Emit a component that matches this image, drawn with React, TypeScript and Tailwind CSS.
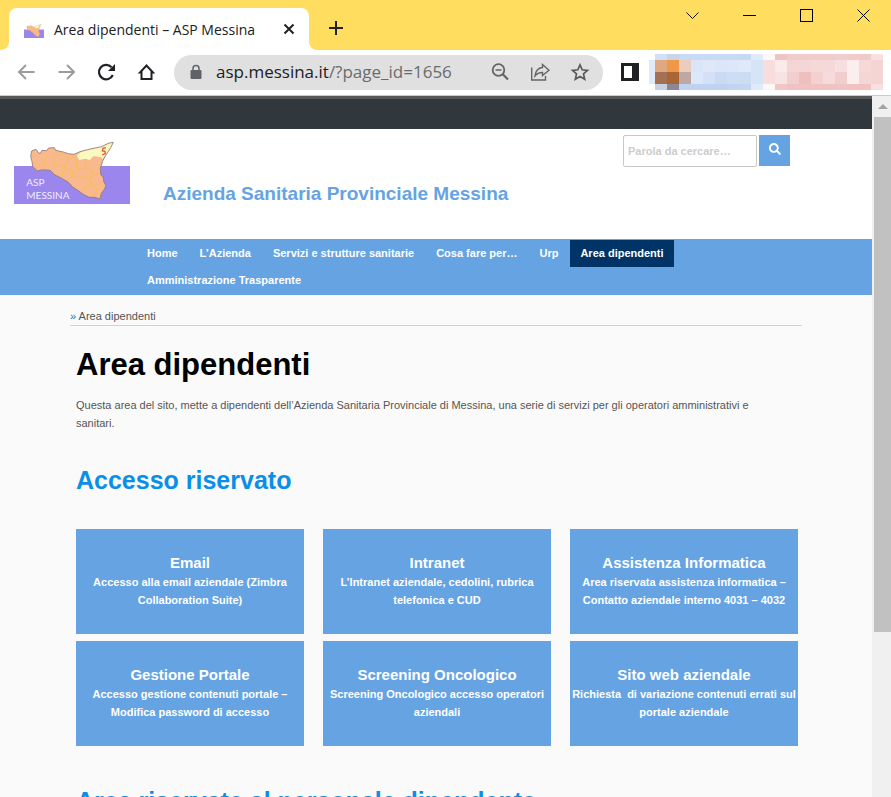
import React from "react";
import { FaSearch } from "react-icons/fa";

const NAV_ITEMS = [
  { label: "Home" },
  { label: "L’Azienda" },
  { label: "Servizi e strutture sanitarie" },
  { label: "Cosa fare per…" },
  { label: "Urp" },
  { label: "Area dipendenti", active: true },
  { label: "Amministrazione Trasparente" },
];

const SERVICES = [
  { title: "Email", text: "Accesso alla email aziendale (Zimbra Collaboration Suite)" },
  { title: "Intranet", text: "L’Intranet aziendale, cedolini, rubrica telefonica e CUD" },
  { title: "Assistenza Informatica", text: "Area riservata assistenza informatica – Contatto aziendale interno 4031 – 4032" },
  { title: "Gestione Portale", text: "Accesso gestione contenuti portale – Modifica password di accesso" },
  { title: "Screening Oncologico", text: "Screening Oncologico accesso operatori aziendali" },
  { title: "Sito web aziendale", text: "Richiesta \u00a0di variazione contenuti errati sul portale aziendale" },
];

// Pixelated strip of extensions and profile: four rows of nineteen cells.
const MOSAIC: { y: number; h: number; cells: string[] }[] = [
  { y: 0, h: 6, cells: ["d2dff4", "c9d5e6", "c8daf5", "c8daf5", "c8daf5", "c8daf5", "c9dbf4", "c6d9f2", "e0ebfa", "fdf8f8", "efc4c4", "f2cccc", "f2cbcb", "f2cbcb", "f2cbcc", "f2cdcd", "f2cbcb", "f0c9c9", "f8e0e0"] },
  { y: 6, h: 12, cells: ["e0a880", "ef9848", "eacdbc", "dae6f8", "dfe8f9", "dce6f8", "dce8f9", "dee9f9", "d6e4f7", "f7dddd", "fbeaea", "f4d5d5", "f4d6d8", "f5d8d8", "f5d9d8", "f7dfe1", "fdeeee", "f6d8d6", "f5d5d3"] },
  { y: 18, h: 12, cells: ["a37053", "a86535", "bda9a2", "dce8f9", "d3e0f6", "c9daf3", "cdddf4", "cbdcf3", "d6e4f7", "f7dddd", "f7e3e3", "f2cece", "edc0be", "f4d1d0", "f7dadc", "f2cdce", "fdeeee", "f5d6d5", "f5d5d3"] },
  { y: 30, h: 6, cells: ["c8d1e2", "8b8794", "bfd3f1", "bfd3f1", "bfd3f1", "bfd3f1", "c1d5f2", "c2d6f2", "e0ebfa", "fdf8f8", "f2c6c6", "f0c2c2", "f0c2c2", "f0c2c2", "f0c2c2", "f0c4c4", "f0c2c2", "f0c2c2", "f8e0e0"] },
];

function SicilyLogo({ className, showText = true }: { className: string; showText?: boolean }) {
  return (
    <svg viewBox="42 48 348 189" preserveAspectRatio="none" className={className} aria-hidden="true">
      <rect x="42" y="123" width="348" height="114" fill="#9a86ec" />
      <path
        d="M92 95 L95 78 L108 73 L116 84 L121 85 L126 76 L140 77 L146 69 L163 68 L167 76 L190 81 L205 86 L222 88 L240 80 L262 74 L290 68 L305 65 L325 55 L340 52 L332 68 L318 90 L308 108 L301 130 L302 148 L310 158 L312 172 L318 182 L312 195 L304 205 L300 222 L285 217 L268 217 L250 208 L232 195 L218 186 L205 172 L182 158 L165 150 L150 136 L125 134 L112 138 L98 124 L96 110 Z"
        fill="#fab98c"
        stroke="#8d7a76"
        strokeWidth="2.500"
        strokeLinejoin="round"
      />
      <path
        d="M230 92 L242 82 L264 76 L292 70 L306 67 L326 57 L337 54 L330 68 L316 90 L307 103 L304 96 L280 94 L270 105 L255 101 L238 105 Z"
        fill="#fafac0"
      />
      <g fill="none" stroke="#f3c24e" strokeWidth="3">
        <path d="M140 94 L131 108 L137 122 L127 134" />
        <path d="M163 92 L188 88 L204 100 L201 116 L188 124 L165 118 L158 104 Z" />
        <path d="M204 100 L220 96 L232 108 L228 128 L243 134 L262 132 L276 138 L280 152 L268 160 L246 156 L216 158 L218 140 L200 130 L186 144 L190 158" />
        <path d="M262 132 L254 118 L258 104" />
        <path d="M268 160 L274 176 L258 184 L246 202 M280 152 L296 150 M274 176 L290 190 L284 214" />
      </g>
      <path d="M318 68 L309 70 L307 78 L315 79 L316 86 L306 90" fill="none" stroke="#e2573b" strokeWidth="4" />
      {showText && (
        <g fill="#f1edff" fontFamily="Lato, sans-serif" fontSize="30">
          <text x="79" y="184">ASP</text>
          <text x="79" y="222">MESSINA</text>
        </g>
      )}
    </svg>
  );
}

function TabFlare({ className }: { className: string }) {
  return (
    <svg viewBox="0 0 8 8" className={className} aria-hidden="true">
      <path d="M8 0 V8 H0 A8 8 0 0 0 8 0 Z" fill="#fff" />
    </svg>
  );
}

function TitleBar() {
  return (
    <div className="flex h-[50px] shrink-0 items-end justify-between bg-[#ffdd5e]">
      <div className="flex items-end">
        <TabFlare className="ml-px size-2" />
        <div className="flex h-[42px] w-[300px] items-center rounded-t-lg bg-white pr-2.5 pl-[15px]">
          <SicilyLogo className="mt-1 h-3.5 w-5" showText={false} />
          <span className="ml-2.5 flex-1 text-[14px] whitespace-nowrap text-[#202124]">Area dipendenti – ASP Messina</span>
          <button type="button" aria-label="Chiudi scheda" className="flex size-5 items-center justify-center">
            <svg viewBox="0 0 12 12" className="size-3" fill="none" stroke="#202124" strokeWidth="2">
              <path d="M1.500 1.500 L10.500 10.500 M10.500 1.500 L1.500 10.500" />
            </svg>
          </button>
        </div>
        <TabFlare className="size-2 -scale-x-100" />
        <button type="button" aria-label="Nuova scheda" className="mb-3 ml-[9px] flex size-5 items-center justify-center">
          <svg viewBox="0 0 16 16" className="size-4" fill="none" stroke="#202124" strokeWidth="2">
            <path d="M8 1 V15 M1 8 H15" />
          </svg>
        </button>
      </div>
      <div className="flex items-center gap-[42px] self-start pt-2 pr-5">
        <button type="button" aria-label="Cerca schede">
          <svg viewBox="0 0 15 15" className="size-[15px]" fill="none" stroke="#111" strokeWidth="1">
            <path d="M1.500 4.500 L7.500 10.500 L13.500 4.500" />
          </svg>
        </button>
        <button type="button" aria-label="Riduci a icona">
          <svg viewBox="0 0 15 15" className="size-[15px]" fill="none" stroke="#000" strokeWidth="1">
            <path d="M1 7.500 H14" />
          </svg>
        </button>
        <button type="button" aria-label="Ingrandisci">
          <svg viewBox="0 0 15 15" className="size-[15px]" fill="none" stroke="#000" strokeWidth="1">
            <rect x="1.500" y="1.500" width="12" height="12" />
          </svg>
        </button>
        <button type="button" aria-label="Chiudi">
          <svg viewBox="0 0 15 15" className="size-[15px]" fill="none" stroke="#000" strokeWidth="1">
            <path d="M1.500 1.500 L13.500 13.500 M13.500 1.500 L1.500 13.500" />
          </svg>
        </button>
      </div>
    </div>
  );
}

function Toolbar() {
  return (
    <div className="flex h-[46px] shrink-0 items-center border-b border-[#cbcbcb] bg-white pr-2 pb-px pl-4">
      <div className="flex gap-5">
        <button type="button" aria-label="Indietro">
          <svg viewBox="0 0 20 20" className="size-5" fill="none" stroke="#9c9c9c" strokeWidth="2">
            <path d="M18.500 10 H3.500 M10 3 L3 10 L10 17" />
          </svg>
        </button>
        <button type="button" aria-label="Avanti">
          <svg viewBox="0 0 20 20" className="size-5" fill="none" stroke="#9c9c9c" strokeWidth="2">
            <path d="M2.500 10 H17.500 M11 3 L18 10 L11 17" />
          </svg>
        </button>
        <button type="button" aria-label="Ricarica">
          <svg viewBox="0 0 20 20" className="size-5" fill="none" stroke="#202124" strokeWidth="2.200">
            <path d="M16.800 13 A7.200 7.200 0 1 1 15.500 5.200" />
            <path d="M19 2 V9 H12 Z" fill="#202124" stroke="none" />
          </svg>
        </button>
        <button type="button" aria-label="Pagina iniziale">
          <svg viewBox="0 0 20 20" className="size-5" fill="none" stroke="#202124" strokeWidth="2">
            <path d="M4 10.500 H5.500 V17 H15.500 V10.500 H17 L10.500 3.500 Z" />
          </svg>
        </button>
      </div>
      <div className="ml-[18px] flex h-[35px] flex-1 items-center rounded-full bg-[#e0e0e0] pr-[13px] pl-4">
        <svg viewBox="0 0 12 16" className="h-4 w-3" aria-hidden="true">
          <rect x="0.500" y="6" width="11" height="9" rx="1" fill="#5f6368" />
          <path d="M3 6.500 V4.500 A3 3 0 0 1 9 4.500 V6.500" fill="none" stroke="#5f6368" strokeWidth="1.500" />
        </svg>
        <p className="ml-3.5 flex-1 text-[17px] whitespace-nowrap text-[#6b6b6b]">
          <span className="text-[#202124]">asp.messina.it</span>/?page_id=1656
        </p>
        <div className="flex gap-5">
          <button type="button" aria-label="Zoom">
            <svg viewBox="0 0 20 20" className="size-5" fill="none" stroke="#636466">
              <circle cx="8.500" cy="8" r="5.800" strokeWidth="1.800" />
              <path d="M5.500 8 H11.500" strokeWidth="1.500" />
              <path d="M12.800 12.300 L18 17.500" strokeWidth="2.200" />
            </svg>
          </button>
          <button type="button" aria-label="Condividi">
            <svg viewBox="0 0 20 20" className="size-5" fill="none" stroke="#636466" strokeWidth="1.400">
              <path d="M1.700 5.500 V18 H15.500 V14" />
              <path d="M12.500 2.500 L19 8.200 L12.500 13.500 V10.500 C9 10.500 7 11.500 5 14 C5.500 9.500 8 6 12.500 5.500 Z" />
            </svg>
          </button>
          <button type="button" aria-label="Aggiungi ai preferiti">
            <svg viewBox="0 0 20 20" className="size-5" fill="none" stroke="#5a5b5d" strokeWidth="1.700">
              <path d="M10 2.800 L12.200 7.800 L17.500 8.300 L13.500 11.900 L14.700 17.300 L10 14.500 L5.300 17.300 L6.500 11.900 L2.500 8.300 L7.800 7.800 Z" />
            </svg>
          </button>
        </div>
      </div>
      <button type="button" aria-label="Pannello laterale" className="ml-[18px]">
        <svg viewBox="0 0 18 18" className="size-[18px]">
          <rect width="18" height="18" fill="#202124" />
          <rect x="3" y="3" width="8" height="12" fill="#fff" />
        </svg>
      </button>
      <svg viewBox="0 0 234 36" className="ml-2.5 h-9 w-[234px]" shapeRendering="crispEdges" aria-hidden="true">
        <rect x="0" y="6" width="6" height="24" fill="#deeafa" />
        {MOSAIC.map((row) =>
          row.cells.map((fill, i) => (
            <rect key={`${row.y}-${i}`} x={6 + i * 12} y={row.y} width="12" height={row.h} fill={`#${fill}`} />
          )),
        )}
      </svg>
    </div>
  );
}

function SiteHeader() {
  return (
    <header>
      <div className="h-[33px] border-t-[3px] border-[#585858] bg-[#30373d]" />
      <div className="flex h-[110px] items-start bg-white pr-[82px] pl-3.5">
        <SicilyLogo className="mt-3 h-[63px] w-[116px]" />
        <p className="mt-[53px] ml-[33px] flex-1 text-[19px] leading-6 font-bold text-[#65a3e3]">
          Azienda Sanitaria Provinciale Messina
        </p>
        <form className="mt-1.5 flex gap-0.5" onSubmit={(e) => e.preventDefault()}>
          <input
            type="search"
            aria-label="Parola da cercare"
            placeholder="Parola da cercare…"
            className="h-8 w-[134px] rounded-xs border border-[#c8c8c8] px-1 text-[11px] font-bold text-[#555] placeholder:text-[#cccccc]"
          />
          <button type="submit" aria-label="Cerca" className="flex h-[31px] w-[31px] items-center justify-center bg-[#65a3e3] pb-1">
            <FaSearch className="size-3 text-white" />
          </button>
        </form>
      </div>
      <nav className="flex flex-wrap bg-[#65a3e3] pt-px pr-[130px] pb-px pl-[137px]">
        {NAV_ITEMS.map((item) => (
          <a
            key={item.label}
            href="#"
            aria-current={item.active ? "page" : undefined}
            className={`mr-0.5 h-[27px] px-2.5 text-[11px] leading-[27px] font-bold whitespace-nowrap text-white ${item.active ? "bg-[#003366]" : ""}`}
          >
            {item.label}
          </a>
        ))}
      </nav>
    </header>
  );
}

function ServiceCard({ title, text }: { title: string; text: string }) {
  return (
    <a href="#" className="block h-[105px] bg-[#65a3e3] px-0.5 pt-6 text-center font-bold text-white">
      <h3 className="text-[15px] leading-5">{title}</h3>
      <p className="text-[11px] leading-[18px]">{text}</p>
    </a>
  );
}

function Scrollbar() {
  return (
    <div className="flex w-[19px] shrink-0 flex-col bg-[#f0f0f0] pl-0.5" aria-hidden="true">
      <div className="flex h-[21px] items-center justify-center">
        <svg viewBox="0 0 10 6" className="h-1.5 w-2.5">
          <path d="M0 5 L5 0 L10 5 Z" fill="#a3a3a3" />
        </svg>
      </div>
      <div className="h-[73.500%] bg-[#c1c1c1]" />
    </div>
  );
}

export default function App() {
  return (
    <div className="flex h-screen flex-col overflow-hidden bg-[#fafafa] font-['Open_Sans','Noto_Sans',sans-serif]">
      <TitleBar />
      <Toolbar />
      <div className="flex min-h-0 flex-1">
        <div className="min-w-0 flex-1 overflow-hidden font-['Liberation_Sans',Arial,sans-serif]">
          <SiteHeader />
          <main className="mx-auto max-w-[732px]">
            <p className="border-b border-[#d2d2d2] pt-3 text-[11px] leading-[18px] text-[#555]">
              <span className="text-[#0a75c2]">»</span> Area dipendenti
            </p>
            <div className="pr-1 pl-1.5">
              <h1 className="mt-[21px] text-[31px] leading-9 font-bold text-black">Area dipendenti</h1>
              <p className="mt-[13px] pr-6 text-[11px] leading-[18px] text-[#555]">
                Questa area del sito, mette a dipendenti dell’Azienda Sanitaria Provinciale di Messina, una serie di servizi per gli
                operatori amministrativi e sanitari.
              </p>
              <h2 className="mt-8 text-[25px] leading-8 font-bold text-[#0a8fe8]">Accesso riservato</h2>
              <div className="mt-[33px] grid grid-cols-3 gap-x-[19px] gap-y-[7px]">
                {SERVICES.map((s) => (
                  <ServiceCard key={s.title} title={s.title} text={s.text} />
                ))}
              </div>
              <h2 className="mt-[39px] text-[25px] leading-8 font-bold text-[#0a8fe8]">Area riservate al personale dipendente</h2>
            </div>
          </main>
        </div>
        <Scrollbar />
      </div>
    </div>
  );
}
